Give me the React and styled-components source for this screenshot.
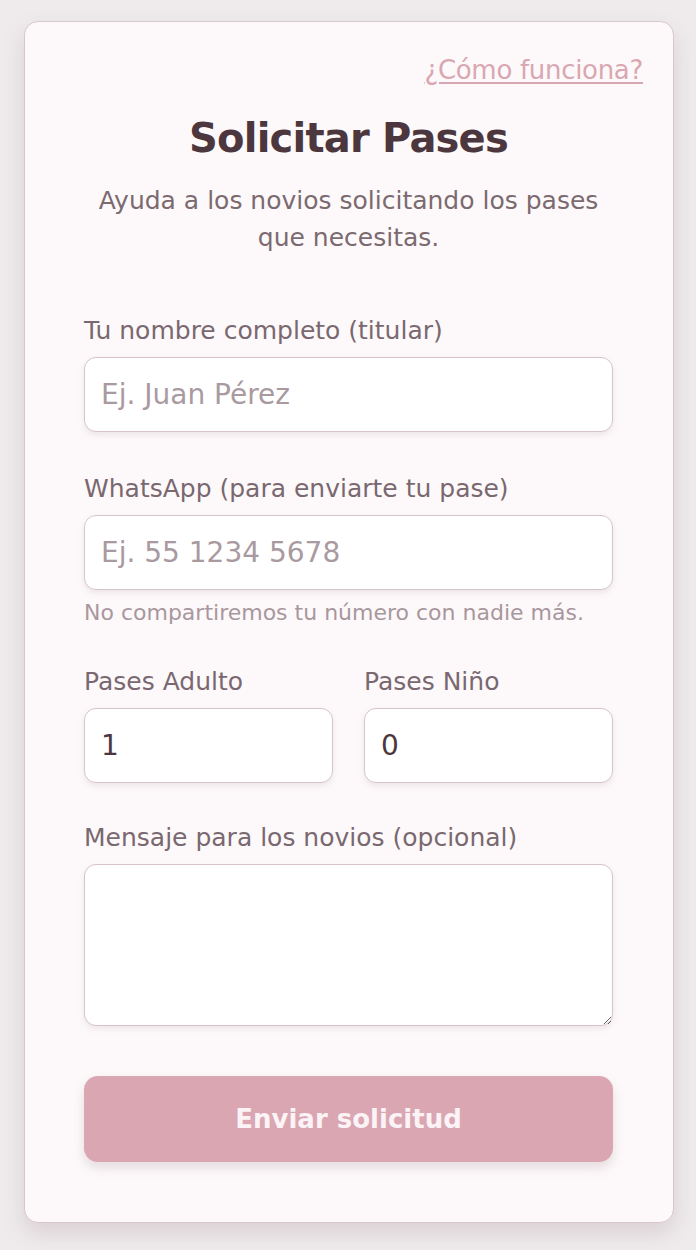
import styled, { createGlobalStyle } from "styled-components";

const GlobalStyle = createGlobalStyle`
  * { box-sizing: border-box; }
  body {
    margin: 0;
    background: #efebec;
    font-family: "DejaVu Sans", "Open Sans", sans-serif;
  }
`;

const Page = styled.div`
  padding: 21px 22px 28px 24px;
`;

const Card = styled.form`
  background: #fdf9fa;
  border: 1px solid #d9c7cc;
  border-radius: 14px;
  box-shadow: 0 10px 22px rgba(120, 90, 100, 0.18);
  padding: 33px 60px 60px 59px;
  display: flex;
  flex-direction: column;
`;

const HelpLink = styled.a`
  align-self: flex-end;
  margin-right: -30px;
  color: #d9a7b2;
  font-size: 26px;
  line-height: 30px;
  letter-spacing: -0.3px;
  text-decoration: underline;
  text-underline-offset: 3px;
  cursor: pointer;
`;

const Title = styled.h1`
  margin: 29px 0 0;
  text-align: center;
  color: #4b373d;
  font-size: 40px;
  line-height: 48px;
  font-weight: 600;
  letter-spacing: -0.8px;
`;

const Subtitle = styled.p`
  margin: 20px 0 0;
  text-align: center;
  color: #7b6a70;
  font-size: 25px;
  line-height: 37px;
`;

const Field = styled.div`
  display: flex;
  flex-direction: column;
  margin-top: ${(p) => p.$top || 40}px;
`;

const Label = styled.label`
  color: #7a6870;
  font-size: 25px;
  line-height: 30px;
  margin-bottom: 11px;
`;

const Input = styled.input`
  width: 100%;
  height: 75px;
  border: 1px solid #d7c4c9;
  border-radius: 12px;
  background: #fff;
  box-shadow: 0 3px 6px rgba(120, 90, 100, 0.12);
  padding: 0 16px;
  font-family: inherit;
  font-size: 28px;
  color: #4b373d;
  outline: none;
  &::placeholder { color: #a99a9f; }
`;

const TextArea = styled.textarea`
  width: 100%;
  height: 162px;
  border: 1px solid #d7c4c9;
  border-radius: 12px;
  background: #fff;
  box-shadow: 0 3px 6px rgba(120, 90, 100, 0.12);
  padding: 16px;
  font-family: inherit;
  font-size: 28px;
  color: #4b373d;
  outline: none;
  resize: vertical;
`;

const Hint = styled.small`
  margin-top: 10px;
  color: #a8979d;
  font-size: 22px;
  line-height: 26px;
`;

const Row = styled.div`
  display: grid;
  grid-template-columns: 1fr 1fr;
  gap: 31px;
`;

const Submit = styled.button`
  margin-top: 50px;
  height: 86px;
  border: none;
  border-radius: 14px;
  background: #d9a6b2;
  box-shadow: 0 6px 12px rgba(120, 90, 100, 0.18);
  color: #fbf3f5;
  font-family: inherit;
  font-size: 26px;
  font-weight: 600;
  cursor: pointer;
`;

export default function App() {
  return (
    <Page>
      <GlobalStyle />
      <Card onSubmit={(e) => e.preventDefault()}>
        <HelpLink>¿Cómo funciona?</HelpLink>
        <Title>Solicitar Pases</Title>
        <Subtitle>Ayuda a los novios solicitando los pases que necesitas.</Subtitle>

        <Field $top={60}>
          <Label>Tu nombre completo (titular)</Label>
          <Input placeholder="Ej. Juan Pérez" />
        </Field>

        <Field $top={42}>
          <Label>WhatsApp (para enviarte tu pase)</Label>
          <Input placeholder="Ej. 55 1234 5678" />
          <Hint>No compartiremos tu número con nadie más.</Hint>
        </Field>

        <Row>
          <Field $top={41}>
            <Label>Pases Adulto</Label>
            <Input type="number" defaultValue="1" />
          </Field>
          <Field $top={41}>
            <Label>Pases Niño</Label>
            <Input type="number" defaultValue="0" />
          </Field>
        </Row>

        <Field>
          <Label>Mensaje para los novios (opcional)</Label>
          <TextArea />
        </Field>

        <Submit type="submit">Enviar solicitud</Submit>
      </Card>
    </Page>
  );
}
